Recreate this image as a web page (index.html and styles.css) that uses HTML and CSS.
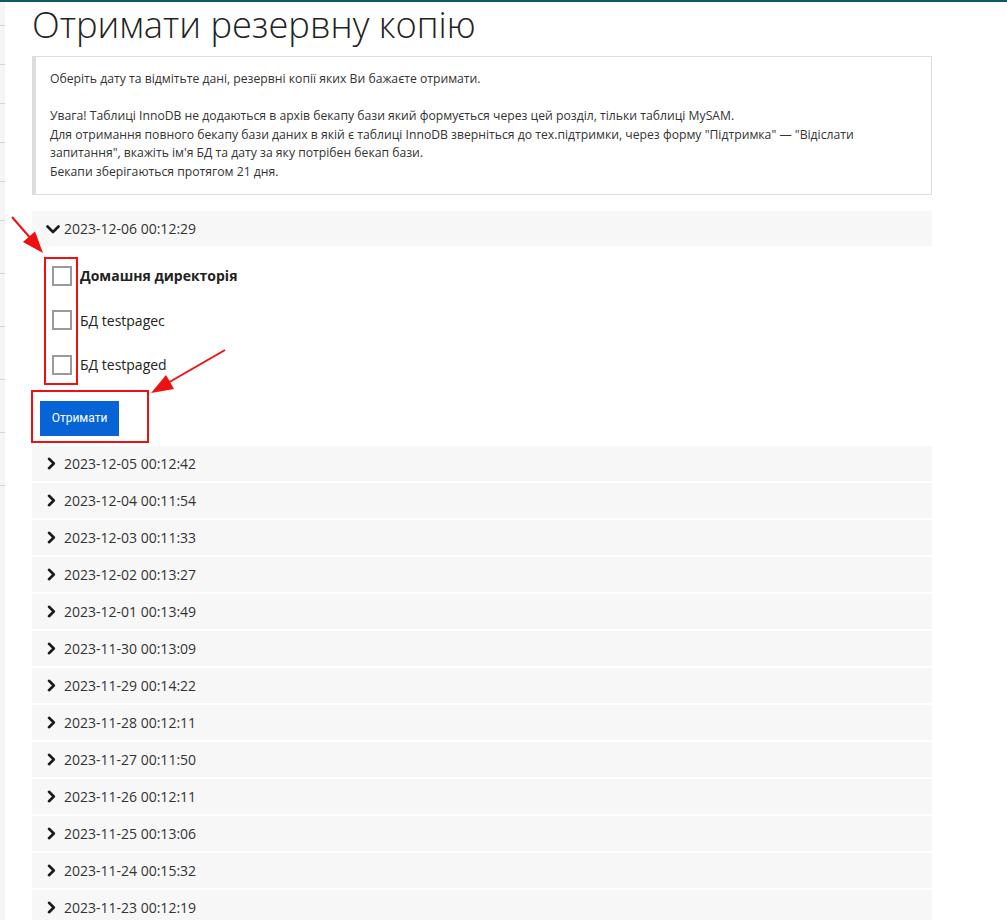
FILE: index.html
```html
<!DOCTYPE html>
<html lang="uk">
<head>
<meta charset="utf-8">
<title>Отримати резервну копію</title>
<link rel="stylesheet" href="styles.css">
</head>
<body>
<div class="topbar"></div>
<div class="layout">
  <aside class="sidebar">
    <div class="side-item s0"></div>
    <div class="side-item s1"></div>
    <div class="side-item s1"></div>
    <div class="side-item s1"></div>
    <div class="side-item s1"></div>
    <div class="side-item s1"></div>
    <div class="side-item s2"></div>
    <div class="side-item s2"></div>
    <div class="side-item s2"></div>
    <div class="side-item s2"></div>
    <div class="side-item s2"></div>
  </aside>
  <main class="main">
    <h1 class="title">Отримати резервну копію</h1>
    <div class="info">
      Оберіть дату та відмітьте дані, резервні копії яких Ви бажаєте отримати.<br><br>
      Увага! Таблиці InnoDB не додаються в архів бекапу бази який формується через цей розділ, тільки таблиці MySAM.<br>
      Для отримання повного бекапу бази даних в якій є таблиці InnoDB зверніться до тех.підтримки, через форму "Підтримка" — "Відіслати<br>запитання", вкажіть ім'я БД та дату за яку потрібен бекап бази.<br>
      Бекапи зберігаються протягом 21 дня.
    </div>

    <div class="accordion">
      <div class="item open">
        <div class="head">
          <svg class="chev-down" width="14" height="9" viewBox="0 0 14 9"><polyline points="1.5,1.5 7,7 12.5,1.5" fill="none" stroke="#1a1a1a" stroke-width="2.6" stroke-linecap="round" stroke-linejoin="round"/></svg>
          <span>2023-12-06 00:12:29</span>
        </div>
        <div class="body">
          <label class="check-row"><span class="box"></span><span class="lbl bold">Домашня директорія</span></label>
          <label class="check-row"><span class="box"></span><span class="lbl">БД testpagec</span></label>
          <label class="check-row"><span class="box"></span><span class="lbl">БД testpaged</span></label>
          <button class="btn">Отримати</button>
          <div class="mark mark-checks"></div>
          <div class="mark mark-btn"></div>
        </div>
      </div>
      <div class="item"><div class="head"><svg class="chev-right" width="9" height="13" viewBox="0 0 9 13"><polyline points="2,1.8 6.8,6.5 2,11.2" fill="none" stroke="#1a1a1a" stroke-width="2.6" stroke-linecap="round" stroke-linejoin="round"/></svg><span>2023-12-05 00:12:42</span></div></div>
      <div class="item"><div class="head"><svg class="chev-right" width="9" height="13" viewBox="0 0 9 13"><polyline points="2,1.8 6.8,6.5 2,11.2" fill="none" stroke="#1a1a1a" stroke-width="2.6" stroke-linecap="round" stroke-linejoin="round"/></svg><span>2023-12-04 00:11:54</span></div></div>
      <div class="item"><div class="head"><svg class="chev-right" width="9" height="13" viewBox="0 0 9 13"><polyline points="2,1.8 6.8,6.5 2,11.2" fill="none" stroke="#1a1a1a" stroke-width="2.6" stroke-linecap="round" stroke-linejoin="round"/></svg><span>2023-12-03 00:11:33</span></div></div>
      <div class="item"><div class="head"><svg class="chev-right" width="9" height="13" viewBox="0 0 9 13"><polyline points="2,1.8 6.8,6.5 2,11.2" fill="none" stroke="#1a1a1a" stroke-width="2.6" stroke-linecap="round" stroke-linejoin="round"/></svg><span>2023-12-02 00:13:27</span></div></div>
      <div class="item"><div class="head"><svg class="chev-right" width="9" height="13" viewBox="0 0 9 13"><polyline points="2,1.8 6.8,6.5 2,11.2" fill="none" stroke="#1a1a1a" stroke-width="2.6" stroke-linecap="round" stroke-linejoin="round"/></svg><span>2023-12-01 00:13:49</span></div></div>
      <div class="item"><div class="head"><svg class="chev-right" width="9" height="13" viewBox="0 0 9 13"><polyline points="2,1.8 6.8,6.5 2,11.2" fill="none" stroke="#1a1a1a" stroke-width="2.6" stroke-linecap="round" stroke-linejoin="round"/></svg><span>2023-11-30 00:13:09</span></div></div>
      <div class="item"><div class="head"><svg class="chev-right" width="9" height="13" viewBox="0 0 9 13"><polyline points="2,1.8 6.8,6.5 2,11.2" fill="none" stroke="#1a1a1a" stroke-width="2.6" stroke-linecap="round" stroke-linejoin="round"/></svg><span>2023-11-29 00:14:22</span></div></div>
      <div class="item"><div class="head"><svg class="chev-right" width="9" height="13" viewBox="0 0 9 13"><polyline points="2,1.8 6.8,6.5 2,11.2" fill="none" stroke="#1a1a1a" stroke-width="2.6" stroke-linecap="round" stroke-linejoin="round"/></svg><span>2023-11-28 00:12:11</span></div></div>
      <div class="item"><div class="head"><svg class="chev-right" width="9" height="13" viewBox="0 0 9 13"><polyline points="2,1.8 6.8,6.5 2,11.2" fill="none" stroke="#1a1a1a" stroke-width="2.6" stroke-linecap="round" stroke-linejoin="round"/></svg><span>2023-11-27 00:11:50</span></div></div>
      <div class="item"><div class="head"><svg class="chev-right" width="9" height="13" viewBox="0 0 9 13"><polyline points="2,1.8 6.8,6.5 2,11.2" fill="none" stroke="#1a1a1a" stroke-width="2.6" stroke-linecap="round" stroke-linejoin="round"/></svg><span>2023-11-26 00:12:11</span></div></div>
      <div class="item"><div class="head"><svg class="chev-right" width="9" height="13" viewBox="0 0 9 13"><polyline points="2,1.8 6.8,6.5 2,11.2" fill="none" stroke="#1a1a1a" stroke-width="2.6" stroke-linecap="round" stroke-linejoin="round"/></svg><span>2023-11-25 00:13:06</span></div></div>
      <div class="item"><div class="head"><svg class="chev-right" width="9" height="13" viewBox="0 0 9 13"><polyline points="2,1.8 6.8,6.5 2,11.2" fill="none" stroke="#1a1a1a" stroke-width="2.6" stroke-linecap="round" stroke-linejoin="round"/></svg><span>2023-11-24 00:15:32</span></div></div>
      <div class="item"><div class="head"><svg class="chev-right" width="9" height="13" viewBox="0 0 9 13"><polyline points="2,1.8 6.8,6.5 2,11.2" fill="none" stroke="#1a1a1a" stroke-width="2.6" stroke-linecap="round" stroke-linejoin="round"/></svg><span>2023-11-23 00:12:19</span></div></div>
    </div>
  </main>
</div>
<svg class="arrows" width="1007" height="920" viewBox="0 0 1007 920">
  <line x1="12" y1="217" x2="32" y2="240" stroke="#ee1111" stroke-width="2"/>
  <polygon points="43,253 35,231.6 22.9,242" fill="#ee1111"/>
  <line x1="225" y1="350" x2="166" y2="384" stroke="#ee1111" stroke-width="2"/>
  <polygon points="151,393 174,389 166,375" fill="#ee1111"/>
</svg>
</body>
</html>
```

FILE: styles.css
```css
* { box-sizing: border-box; }
html, body { margin: 0; padding: 0; background: #fff; }
body {
  font-family: "Open Sans", "Noto Sans", sans-serif;
  color: #333;
  height: 920px;
  overflow: hidden;
  position: relative;
}
.topbar { height: 2px; background: #0f5a62; position: relative; z-index: 1; }
.layout { display: flex; align-items: flex-start; }
.sidebar {
  width: 5px;
  flex: 0 0 5px;
  background: #f5f5f5;
  height: 918px;
}
.side-item { border-bottom: 1px solid #d6d6d6; }
.s0 { height: 24px; }
.s1 { height: 39px; }
.s2 { height: 53px; }
.main {
  margin-left: 27px;
  width: 900px;
}
.title {
  margin: -3px 0 6px 0;
  font-size: 36.3px;
  line-height: 51px;
  font-weight: 300;
  color: #222;
}
.info {
  border: 1px solid #dddddd;
  border-left: 4px solid #dddddd;
  padding: 13px 14px 13px 14px;
  font-size: 12.2px;
  line-height: 18.57px;
  color: #333;
}
.accordion {
  margin-top: 16px;
  display: flex;
  flex-direction: column;
  gap: 2px;
}
.head {
  height: 35px;
  background: #f7f7f7;
  display: flex;
  align-items: center;
  padding-left: 14px;
  font-size: 14px;
  color: #333;
}
.chev-down { margin-right: 4px; margin-top: 1px; }
.chev-right { margin-left: 1px; margin-right: 8px; }
.body {
  position: relative;
  padding: 7px 0 8px 8px;
  display: flex;
  flex-direction: column;
  align-items: flex-start;
}
.check-row {
  height: 44.5px;
  display: flex;
  align-items: center;
  padding-left: 12px;
  font-size: 14px;
  color: #222;
}
.box {
  width: 20px;
  height: 20px;
  border: 2px solid #9a9a9a;
  background: #fff;
  margin-right: 8px;
}
.lbl.bold { font-weight: 700; }
.btn {
  margin-top: 14px;
  width: 79px;
  height: 35px;
  border: 0;
  background: #0764d6;
  color: #fff;
  font-family: Roboto, "Liberation Sans", Arial, sans-serif;
  font-size: 12px;
  padding: 0;
}
.mark {
  position: absolute;
  border: 2px solid #ee1111;
}
.mark-checks { left: 12px; top: 11px; width: 34px; height: 128px; }
.mark-btn { left: -1px; top: 144px; width: 118px; height: 53px; }
.arrows {
  position: absolute;
  left: 0;
  top: 0;
  pointer-events: none;
}
```
